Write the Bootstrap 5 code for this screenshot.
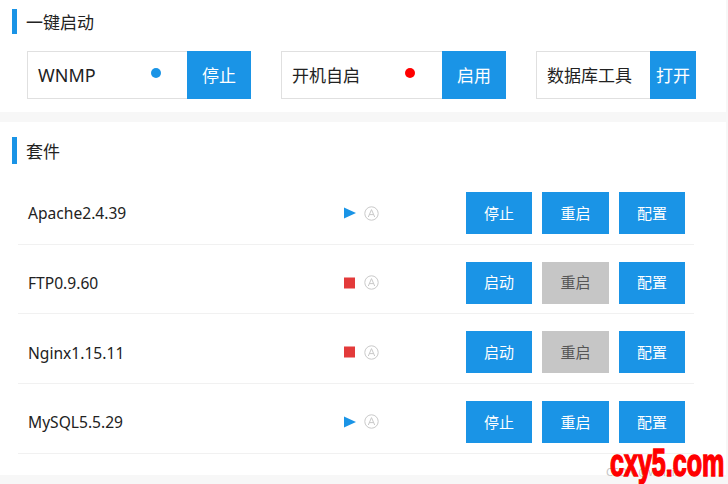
<!DOCTYPE html>
<html lang="zh-CN">
<head>
<meta charset="UTF-8">
<title>套件</title>
<link href="https://cdn.jsdelivr.net/npm/bootstrap@5.3.0/dist/css/bootstrap.min.css" rel="stylesheet">
<style>
html, body { height: 100%; }
body {
    background: #f7f7f7;
    overflow: hidden;
    position: relative;
    font-family: "Noto Sans", "Noto Sans CJK SC", sans-serif;
    color: #222;
}
.panel-box { background: #fff; width: 726px; }
.panel-top { height: 112px; padding-top: 9px; margin-bottom: 10px; }
.panel-main { height: 353px; padding-top: 15px; }
.panel-title {
    margin: 0 0 0 12px;
    height: 25px;
    line-height: 27px;
    padding-left: 9px;
    border-left: 5px solid #1a94e6;
    font-size: 17px;
    font-weight: 400;
}
.panel-main .panel-title { height: 27px; line-height: 29px; }
.quick-row { padding: 17px 0 0 27px; }
.quick-box {
    height: 48px;
    border: 1px solid #e0e0e0;
    border-right: 0;
    font-size: 17px;
    padding-left: 10px;
}
.quick-name { line-height: 49px; }
.quick-latin { font-size: 18px; }
.dot { width: 10px; height: 10px; border-radius: 50%; margin-bottom: 4px; }
.dot-on { background: #1a94e6; }
.dot-off { background: #f00; }
.btn-blue {
    background: #1a94e6;
    color: #fff;
    border: 0;
    border-radius: 0;
    padding: 0;
    font-size: 15px;
}
.btn-blue:hover { background: #1a94e6; color: #fff; }
.btn-quick { height: 48px; width: 64px; font-size: 17px; padding-top: 2px; }
.btn-gray { background: #c6c6c6; color: #555; }
.btn-gray:hover { background: #c6c6c6; color: #555; }
.suite-list { margin: 11px 0 0 18px; width: 676px; }
.suite-row {
    height: 69.67px;
    padding: 17px 0 0 10px;
    border-bottom: 1px solid #f1f1f1;
}
.suite-name { width: 316px; font-size: 15.6px; padding-top: 2px; }
.suite-state { width: 122px; }
.btn-suite { width: 66px; height: 42px; }
.btn-wide { width: 67px; }
.stamp {
    position: absolute;
    left: 610px;
    top: 442px;
    color: #f00;
    font: 700 38px/42px "Liberation Sans", sans-serif;
    transform: scaleX(.66);
    transform-origin: left top;
    -webkit-text-stroke: 1.5px #f00;
}
.stamp-under {
    position: absolute;
    left: 606px;
    top: 464px;
    color: #c4c4c4;
    font-size: 11px;
}
</style>
</head>
<body>

<div class="panel-box panel-top">
    <h5 class="panel-title">一键启动</h5>
    <div class="quick-row d-flex">
        <div class="quick-box d-flex align-items-center" style="width:160px">
            <span class="quick-name quick-latin flex-grow-1">WNMP</span>
            <span class="dot dot-on" style="margin-right:26px"></span>
        </div>
        <button class="btn btn-blue btn-quick">停止</button>
        <div class="quick-box d-flex align-items-center" style="width:161px;margin-left:30px">
            <span class="quick-name flex-grow-1">开机自启</span>
            <span class="dot dot-off" style="margin-right:27px"></span>
        </div>
        <button class="btn btn-blue btn-quick">启用</button>
        <div class="quick-box d-flex align-items-center" style="width:114px;margin-left:30px">
            <span class="quick-name flex-grow-1">数据库工具</span>
        </div>
        <button class="btn btn-blue btn-quick" style="width:46px">打开</button>
    </div>
</div>

<div class="panel-box panel-main">
    <h5 class="panel-title">套件</h5>
    <div class="suite-list" id="suites"></div>
</div>

<span class="stamp-under">CSDN @weixin</span>
<span class="stamp">cxy5.com</span>

<script>
var suites = [
    { name: "Apache2.4.39", on: true },
    { name: "FTP0.9.60", on: false },
    { name: "Nginx1.15.11", on: false },
    { name: "MySQL5.5.29", on: true }
];
var playIcon = '<svg width="12" height="12" viewBox="0 0 12 12"><path d="M0 0.5L12 6L0 11.5Z" fill="#1a94e6"/></svg>';
var stopIcon = '<svg width="12" height="12" viewBox="0 0 12 12"><rect width="11" height="11" y="0.5" fill="#e33a3a"/></svg>';
var autoIcon = '<svg class="ms-2" width="15" height="15" viewBox="0 0 15 15" fill="none" stroke="#c9c9c9"><circle cx="7.5" cy="7.5" r="6.7"/><path d="M4.3 11L7.5 3.6L10.7 11M5.4 8.6H9.6"/></svg>';
document.getElementById("suites").innerHTML = suites.map(function (s) {
    return '<div class="suite-row d-flex">' +
        '<div class="suite-name d-flex align-items-center" style="height:42px">' + s.name + '</div>' +
        '<div class="suite-state d-flex align-items-center" style="height:42px">' + (s.on ? playIcon : stopIcon) + autoIcon + '</div>' +
        '<button class="btn btn-blue btn-suite">' + (s.on ? '停止' : '启动') + '</button>' +
        '<button class="btn btn-blue btn-suite btn-wide ' + (s.on ? '' : 'btn-gray') + '" style="margin-left:10px">重启</button>' +
        '<button class="btn btn-blue btn-suite" style="margin-left:10px">配置</button>' +
        '</div>';
}).join("");
</script>
<script src="https://cdn.jsdelivr.net/npm/bootstrap@5.3.0/dist/js/bootstrap.bundle.min.js"></script>
</body>
</html>
